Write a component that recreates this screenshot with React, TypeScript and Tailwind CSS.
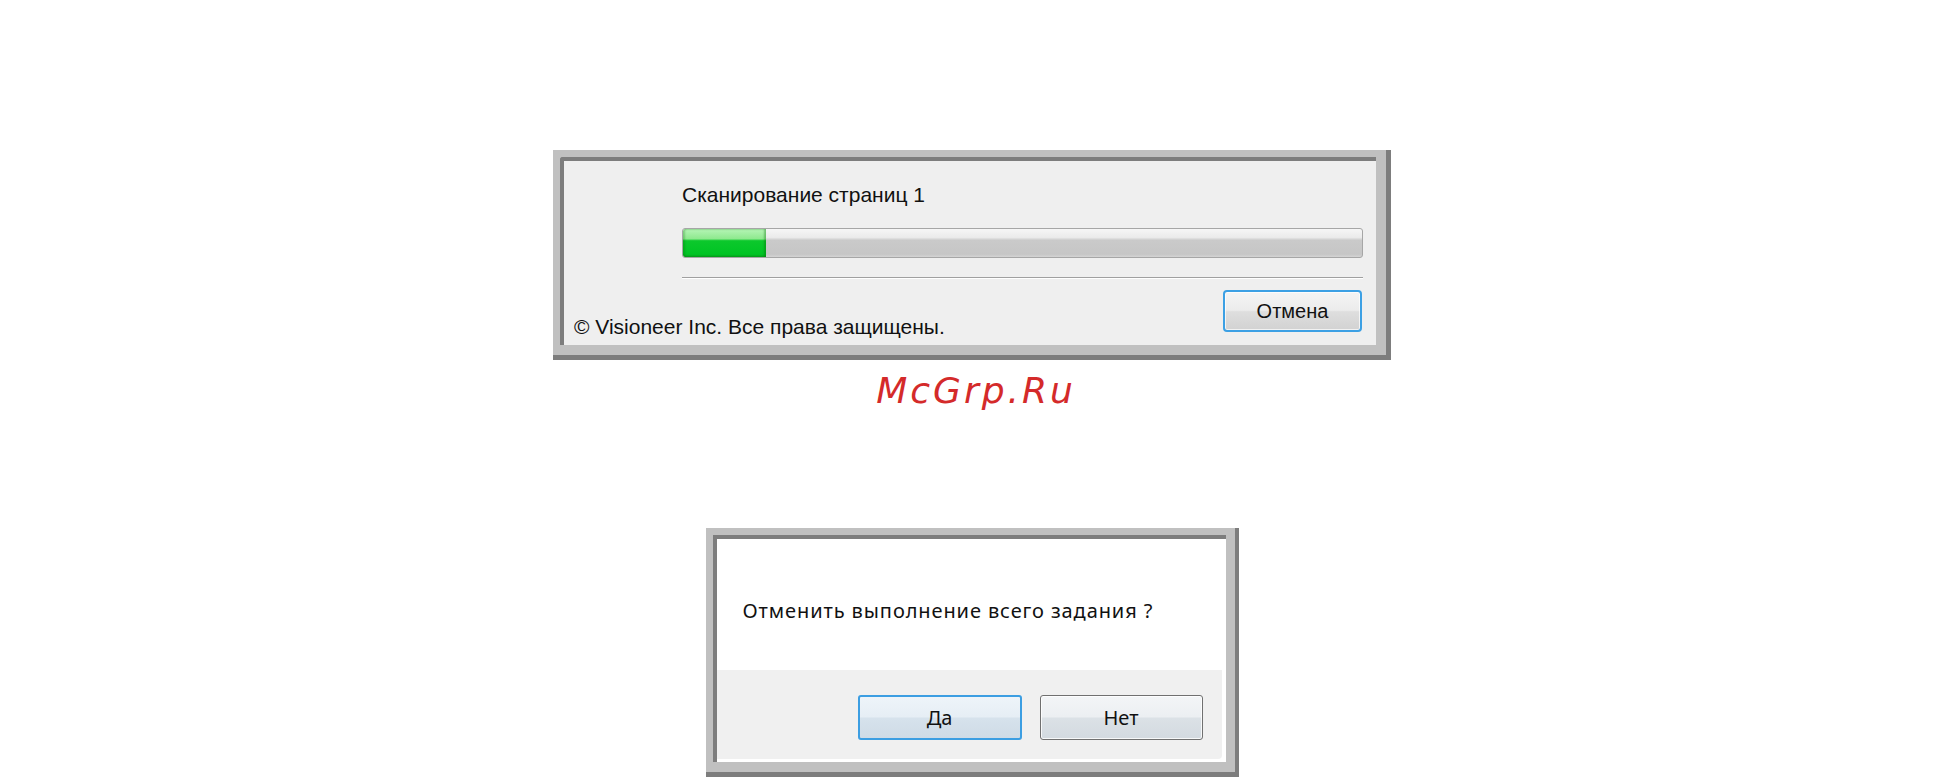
export default function App() {
  return (
    <div className="min-h-[781px] w-full bg-white flex flex-col items-center pt-[150px]">
      {/* scanning progress dialog */}
      <div className="w-[838px] bg-[#c0c0c0] pt-[7px] pl-[7px] pr-[10px] pb-[10px] border-r-[5px] border-b-[5px] border-[#7d7d7d]">
        <div className="h-[188px] border-t-4 border-l-4 border-[#7d7d7d] bg-[#efefef] rounded-tl-[3px] font-['Liberation_Sans',Arial,sans-serif] text-[#111]">
          <div className="pl-[118px] pr-[13px]">
            <div className="mt-[22px] text-[21px] leading-[24px]">Сканирование страниц 1</div>
            <div className="mt-[21px] h-[30px] rounded-[3px] border border-[#a6a6a6] bg-[linear-gradient(#f6f6f6_0%,#ebebeb_30%,#cacaca_40%,#c6c6c6_90%,#d4d4d4_100%)] overflow-hidden">
              <div className="h-full w-[83px] rounded-l-[2px] bg-[linear-gradient(#b6f5b6_0%,#8ee98e_35%,#0cc82c_42%,#00c424_90%,#08a820_100%)] shadow-[inset_-2px_0_2px_rgba(0,100,0,0.35),inset_2px_0_2px_rgba(0,100,0,0.25)]" />
            </div>
            <div className="mt-[19px] h-[2px] border-t border-[#a0a0a0] border-b border-b-white" />
          </div>
          <div className="flex justify-between items-start pl-[10px] pr-[14px]">
            <div className="mt-[36px] text-[21px] leading-[24px]">© Visioneer Inc. Все права защищены.</div>
            <button className="mt-[11px] w-[139px] h-[42px] rounded-[4px] border-2 border-[#3ca0e4] bg-[linear-gradient(#f4f4f4_0%,#ececec_48%,#dedede_52%,#d2d2d2_100%)] text-[20px] text-[#111] shadow-[inset_0_0_0_1px_rgba(255,255,255,0.7)]">
              Отмена
            </button>
          </div>
        </div>
      </div>

      <div className="mt-[13px] ml-[8px] font-['DejaVu_Sans',Verdana,sans-serif] italic text-[36px] leading-none tracking-[3px] text-[#d42a2a]">
        McGrp.Ru
      </div>

      {/* confirm dialog */}
      <div className="mt-[119px] w-[533px] bg-[#c0c0c0] pt-[7px] pl-[7px] pr-[9px] pb-[10px] border-r-[4px] border-b-[5px] border-[#7d7d7d]">
        <div className="h-[227px] border-t-4 border-l-4 border-[#7d7d7d] bg-white flex flex-col font-['Noto_Sans',sans-serif] text-[#111]">
          <div className="h-[131px] pl-[26px]">
            <div className="mt-[58px] text-[20px] leading-[28px] tracking-[0.9px]">Отменить выполнение всего задания ?</div>
          </div>
          <div className="flex-1 mr-[4px] mb-[3px] rounded-br-[4px] bg-[#f0f0f0] flex justify-end gap-[18px] pt-[25px] pr-[19px]">
            <button className="w-[164px] h-[45px] rounded-[3px] border-2 border-[#3c9ee2] bg-[linear-gradient(#eef4f9_0%,#e6eef5_48%,#d6e2ec_52%,#cfdbe6_100%)] text-[20px] text-[#111]">
              Да
            </button>
            <button className="w-[163px] h-[45px] rounded-[3px] border border-[#707070] bg-[linear-gradient(#f3f5f7_0%,#eceff2_48%,#dbe1e6_52%,#d3dae0_100%)] text-[20px] text-[#111] shadow-[inset_0_0_0_1px_rgba(255,255,255,0.8)]">
              Нет
            </button>
          </div>
        </div>
      </div>
    </div>
  )
}
